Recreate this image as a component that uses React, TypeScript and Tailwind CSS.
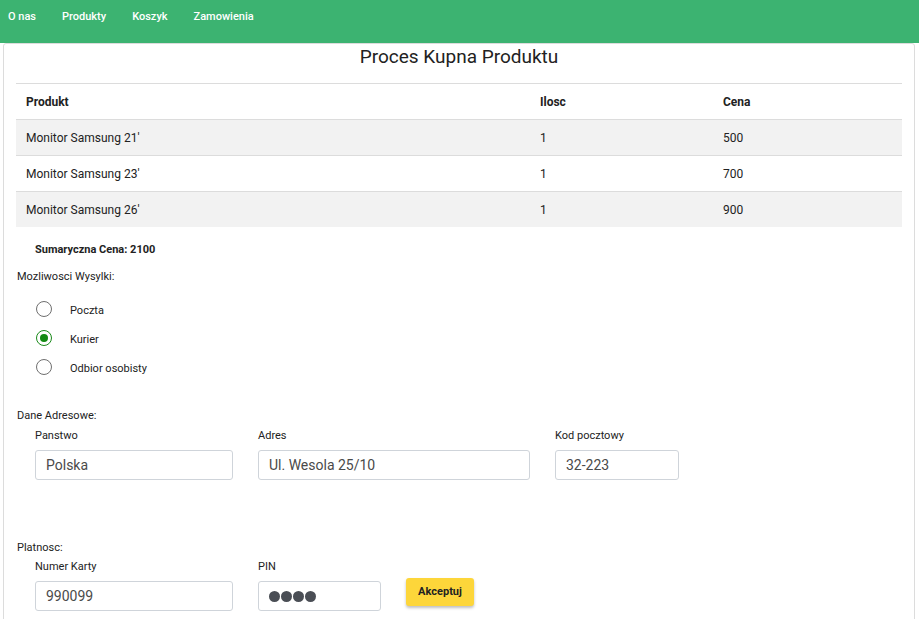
const rows = [
  { name: "Monitor Samsung 21'", qty: 1, price: 500 },
  { name: "Monitor Samsung 23'", qty: 1, price: 700 },
  { name: "Monitor Samsung 26'", qty: 1, price: 900 },
];

const Radio = ({ label, checked }: { label: string; checked?: boolean }) => (
  <label className="flex items-center h-[29px] pl-[20px]">
    <span
      className={
        checked
          ? 'w-4 h-4 rounded-full border-[1.5px] border-[#1a8a1a] flex items-center justify-center'
          : 'w-4 h-4 rounded-full border-[1.5px] border-[#6f6f6f]'
      }
    >
      {checked && <span className="w-2 h-2 rounded-full bg-[#138a13]" />}
    </span>
    <span className="ml-[18px] mt-[6px] text-[11px] text-[#222]">{label}</span>
  </label>
);

const Field = ({ label, value, width }: { label: string; value: string; width: string }) => (
  <div className="flex flex-col">
    <span className="text-[11px] leading-4 text-[#222]">{label}</span>
    <div className={`${width} h-[30px] mt-[6px] border border-[#cfd4da] rounded-[3px] flex items-center pl-[10px] text-[14px] text-[#4a4a4a]`}>
      {value}
    </div>
  </div>
);

const App = () => {
  return (
    <div className="min-h-screen bg-white font-['Roboto',sans-serif] text-[#222]">
      <nav className="h-[43px] bg-[#3cb371] flex items-start pt-[10px] pl-2 gap-[26px] text-[11px] leading-[14px] font-medium text-white">
        <a>O nas</a>
        <a>Produkty</a>
        <a>Koszyk</a>
        <a>Zamowienia</a>
      </nav>

      <div className="ml-[3px] mr-[4px] border border-[#dcdcdc] rounded-t-[3px] px-3 pb-10">
        <h1 className="text-center text-[19px] leading-[26px] mt-0 mb-[13px] text-[#222]">Proces Kupna Produktu</h1>

        <div className="text-[12px]">
          <div className="grid grid-cols-[514px_183px_1fr] h-[36px] items-center border-t border-[#dcdcdc] font-bold">
            <span className="pl-[10px]">Produkt</span>
            <span className="pl-[10px]">Ilosc</span>
            <span className="pl-[10px]">Cena</span>
          </div>
          {rows.map((r, i) => (
            <div
              key={r.name}
              className={`grid grid-cols-[514px_183px_1fr] h-[36px] items-center border-t border-[#dcdcdc] ${i % 2 === 0 ? 'bg-[#f2f2f2]' : 'bg-white'}`}
            >
              <span className="pl-[10px]">{r.name}</span>
              <span className="pl-[10px]">{r.qty}</span>
              <span className="pl-[10px]">{r.price}</span>
            </div>
          ))}
        </div>

        <p className="mt-[15px] pl-[19px] text-[11px] leading-4 font-bold">Sumaryczna Cena: 2100</p>

        <p className="mt-[11px] pl-[1px] text-[11px] leading-4">Mozliwosci Wysylki:</p>
        <div className="mt-[9px] flex flex-col">
          <Radio label="Poczta" />
          <Radio label="Kurier" checked />
          <Radio label="Odbior osobisty" />
        </div>

        <p className="mt-[27px] pl-[1px] text-[11px] leading-4">Dane Adresowe:</p>
        <div className="mt-[4px] pl-[19px] flex gap-[25px]">
          <Field label="Panstwo" value="Polska" width="w-[198px]" />
          <Field label="Adres" value="Ul. Wesola 25/10" width="w-[272px]" />
          <Field label="Kod pocztowy" value="32-223" width="w-[124px]" />
        </div>

        <p className="mt-[60px] pl-[1px] text-[11px] leading-4">Platnosc:</p>
        <div className="mt-[3px] pl-[19px] flex gap-[25px]">
          <Field label="Numer Karty" value="990099" width="w-[198px]" />
          <div className="flex flex-col">
            <span className="text-[11px] leading-4">PIN</span>
            <div className="w-[123px] h-[30px] mt-[6px] border border-[#cfd4da] rounded-[3px] flex items-center pl-[10px] gap-[1px]">
              <span className="w-[11px] h-[11px] rounded-full bg-[#4a4e55]" />
              <span className="w-[11px] h-[11px] rounded-full bg-[#4a4e55]" />
              <span className="w-[11px] h-[11px] rounded-full bg-[#4a4e55]" />
              <span className="w-[11px] h-[11px] rounded-full bg-[#4a4e55]" />
            </div>
          </div>
          <button className="self-start mt-[19px] w-[68px] h-[28px] bg-[#fdd63a] rounded-[3px] shadow-[0_2px_3px_rgba(0,0,0,0.25)] text-[11px] font-bold text-[#222]">
            Akceptuj
          </button>
        </div>
      </div>
    </div>
  );
};

export default App;
